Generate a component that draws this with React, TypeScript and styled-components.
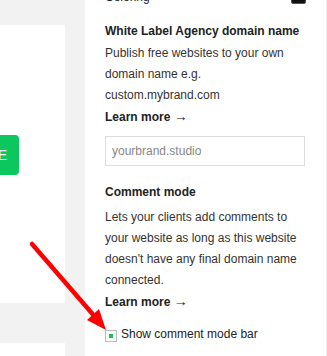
import styled, { createGlobalStyle } from "styled-components";

const GlobalStyle = createGlobalStyle`
  html, body {
    margin: 0;
    padding: 0;
    background: #f2f2f2;
    overflow: hidden;
  }
  body {
    font-family: "Liberation Sans", Arial, sans-serif;
  }
`;

const Page = styled.div`
  position: relative;
  display: grid;
  grid-template-columns: 85px 241px 1fr;
  height: 356px;
  overflow: hidden;
  background: #f2f2f2;
`;

const Canvas = styled.div`
  display: flex;
  flex-direction: column;
  padding-top: 25px;
  gap: 40px;
`;

const Card = styled.div<{ $height?: number }>`
  width: 65px;
  height: ${(p) => (p.$height ? `${p.$height}px` : "auto")};
  flex: ${(p) => (p.$height ? "none" : "1")};
  background: #fff;
  overflow: hidden;
  padding-top: 110px;
  box-sizing: border-box;
`;

const GreenButton = styled.div`
  width: 80px;
  height: 40px;
  margin-left: -61px;
  box-sizing: border-box;
  padding-right: 12px;
  border-radius: 4px;
  background: #0cc75e;
  color: #fff;
  font-size: 14px;
  line-height: 40px;
  text-align: right;
`;

const Panel = styled.div`
  background: #fff;
  padding: 0 20px;
  margin-top: -13px;
  color: #333;
  font-size: 12px;
`;

const ColoringRow = styled.div`
  display: flex;
  align-items: center;
  justify-content: space-between;
  height: 21px;
  line-height: 21px;
  color: #222;
`;

const Swatch = styled.div`
  width: 15px;
  height: 16px;
  margin-top: -4px;
  box-sizing: border-box;
  border: 1px solid #555;
  border-radius: 2px;
  background: #111;
`;

const Title = styled.div<{ $top: number; $bottom: number }>`
  margin-top: ${(p) => p.$top}px;
  margin-bottom: ${(p) => p.$bottom}px;
  font-weight: 700;
  line-height: 21px;
  color: #222;
`;

const Text = styled.p`
  margin: 0;
  line-height: 21px;
  color: #333;
`;

const LearnMore = styled.a`
  display: block;
  margin-top: 1px;
  font-weight: 700;
  line-height: 21px;
  color: #222;
  text-decoration: none;
`;

const ArrowGlyph = styled.span`
  font-size: 14px;
  line-height: 0;
`;

const DomainInput = styled.input`
  display: block;
  width: 200px;
  height: 30px;
  margin-top: 8px;
  box-sizing: border-box;
  border: 1px solid #ddd;
  padding: 0 6px;
  font-family: "Liberation Sans", Arial, sans-serif;
  font-size: 12px;
  color: #333;
  outline: none;

  &::placeholder {
    color: #888;
  }
`;

const CheckRow = styled.label`
  display: flex;
  align-items: center;
  gap: 4px;
  margin-top: 11px;
  line-height: 21px;
  color: #222;
`;

const Box = styled.span`
  display: flex;
  align-items: center;
  justify-content: center;
  width: 12px;
  height: 12px;
  margin-top: 3px;
  box-sizing: border-box;
  border: 1px solid #bbb;
  background: #fff;

  &::after {
    content: "";
    width: 4px;
    height: 4px;
    background: #13c15f;
  }
`;

const Arrow = styled.svg`
  position: absolute;
  left: 0;
  top: 0;
  pointer-events: none;
`;

export default function App() {
  return (
    <>
      <GlobalStyle />
      <Page>
        <Canvas>
          <Card $height={278}>
            <GreenButton>SAVE</GreenButton>
          </Card>
          <Card />
        </Canvas>
        <Panel>
          <ColoringRow>
            <span>Coloring</span>
            <Swatch />
          </ColoringRow>
          <Title $top={13} $bottom={1}>
            White Label Agency domain name
          </Title>
          <Text>
            Publish free websites to your own
            <br />
            domain name e.g.
            <br />
            custom.mybrand.com
          </Text>
          <LearnMore href="#">
            Learn more <ArrowGlyph>→</ArrowGlyph>
          </LearnMore>
          <DomainInput placeholder="yourbrand.studio" />
          <Title $top={16} $bottom={4}>
            Comment mode
          </Title>
          <Text>
            Lets your clients add comments to
            <br />
            your website as long as this website
            <br />
            doesn't have any final domain name
            <br />
            connected.
          </Text>
          <LearnMore href="#">
            Learn more <ArrowGlyph>→</ArrowGlyph>
          </LearnMore>
          <CheckRow>
            <Box />
            Show comment mode bar
          </CheckRow>
        </Panel>
        <div />
        <Arrow width="327" height="356" viewBox="0 0 327 356">
          <line
            x1="32"
            y1="244"
            x2="96"
            y2="318"
            stroke="#ff0000"
            strokeWidth="4.5"
            strokeLinecap="round"
          />
          <polygon points="106,330 87,320 99,309" fill="#ff0000" />
        </Arrow>
      </Page>
    </>
  );
}
